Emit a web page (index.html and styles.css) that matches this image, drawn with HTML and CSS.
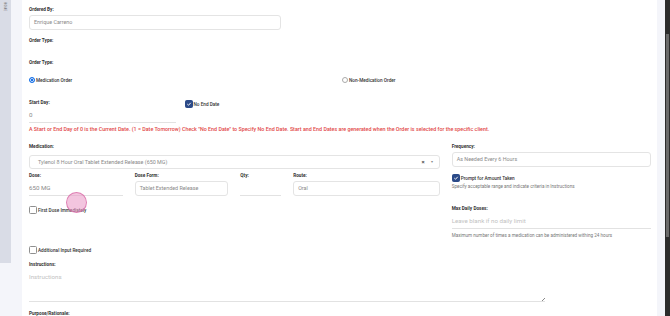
FILE: index.html
```html
<!DOCTYPE html>
<html>
<head>
    <title>New Order</title>
    <link rel="stylesheet" href="styles.css">
</head>
<body>
    <div class="app">
        <aside class="sidebar"><span class="side-label">HOME</span></aside>

        <main class="card">
            <!-- 주문자 -->
            <div class="row row-ordered">
                <div class="field span-5">
                    <label class="label">Ordered By:</label>
                    <div class="box">Enrique Carreno</div>
                </div>
            </div>

            <div class="row row-type-empty">
                <div class="field span-12">
                    <label class="label">Order Type:</label>
                </div>
            </div>

            <div class="row row-type">
                <div class="field span-12">
                    <label class="label">Order Type:</label>
                </div>
                <div class="span-6 radio-line">
                    <span class="radio checked"></span>Medication Order
                </div>
                <div class="span-6 radio-line radio-right">
                    <span class="radio"></span>Non-Medication Order
                </div>
            </div>

            <!-- 시작일 -->
            <div class="row row-start">
                <div class="field span-3">
                    <label class="label">Start Day:</label>
                    <div class="line-input">0</div>
                </div>
                <div class="span-3 check-line check-top">
                    <span class="check checked">
                        <svg viewBox="0 0 10 10"><path d="M2.2 5.2 4.2 7.1 7.9 3" /></svg>
                    </span>No End Date
                </div>
            </div>

            <p class="warning">A Start or End Day of 0 is the Current Date. (1 = Date Tomorrow) Check "No End Date" to Specify No End Date. Start and End Dates are generated when the Order is selected for the specific client.</p>

            <!-- 약품 정보 -->
            <div class="row row-med">
                <div class="span-8 col-left">
                    <div class="field">
                        <label class="label">Medication:</label>
                        <div class="box select-box">
                            <span>Tylenol 8 Hour Oral Tablet Extended Release (650 MG)</span>
                            <span class="select-icons"><span class="clear">&times;</span><span class="caret">&#9662;</span></span>
                        </div>
                    </div>

                    <div class="sub-row">
                        <div class="field span-2">
                            <label class="label">Dose:</label>
                            <div class="line-input">650 MG</div>
                        </div>
                        <div class="field span-2">
                            <label class="label">Dose Form:</label>
                            <div class="box">Tablet Extended Release</div>
                        </div>
                        <div class="field span-1">
                            <label class="label">Qty:</label>
                            <div class="line-input"></div>
                        </div>
                        <div class="field span-3">
                            <label class="label">Route:</label>
                            <div class="box">Oral</div>
                        </div>
                    </div>

                    <div class="check-line first-dose">
                        <span class="check"></span>First Dose Immediately
                    </div>
                    <div class="check-line additional">
                        <span class="check"></span>Additional Input Required
                    </div>
                </div>

                <div class="span-4 col-right">
                    <div class="field">
                        <label class="label">Frequency:</label>
                        <div class="box">As Needed Every 6 Hours</div>
                    </div>
                    <div class="check-line prompt">
                        <span class="check checked">
                            <svg viewBox="0 0 10 10"><path d="M2.2 5.2 4.2 7.1 7.9 3" /></svg>
                        </span>Prompt for Amount Taken
                    </div>
                    <p class="hint">Specify acceptable range and indicate criteria in Instructions</p>
                    <div class="field max-doses">
                        <label class="label">Max Daily Doses:</label>
                        <div class="line-input placeholder">Leave blank if no daily limit</div>
                    </div>
                    <p class="hint hint-max">Maximum number of times a medication can be administered withing 24 hours</p>
                </div>
            </div>

            <!-- 지시사항 -->
            <div class="row row-instr">
                <div class="field span-10">
                    <label class="label">Instructions:</label>
                    <div class="textarea">
                        <span class="placeholder">Instructions</span>
                        <span class="resize"></span>
                    </div>
                </div>
            </div>

            <div class="row row-purpose">
                <div class="field span-12">
                    <label class="label">Purpose/Rationale:</label>
                </div>
            </div>

            <span class="touch-dot"></span>
        </main>

        <div class="right-space"></div>
        <div class="scrollbar"><div class="thumb"></div></div>
    </div>
</body>
</html>
```

FILE: styles.css
```css
body {
    margin: 0;
    font-family: Roboto, "Liberation Sans", sans-serif;
    color: #2f2f2f;
}
.app {
    display: flex;
    height: 316px;
    overflow: hidden;
    background-color: #f4f5fa;
}
.sidebar {
    width: 11px;
    height: 263px;
    background-color: #d9dce6;
    flex-shrink: 0;
}
.side-label {
    display: block;
    writing-mode: vertical-rl;
    font-size: 3px;
    color: #777;
    margin: 2px 0 0 3px;
    letter-spacing: 0.2px;
}
.card {
    position: relative;
    width: 622px;
    margin-left: 11px;
    padding: 6px 6px 0 7px;
    background: white;
    flex-shrink: 0;
}
.right-space {
    width: 8px;
    flex-shrink: 0;
}
.scrollbar {
    width: 5px;
    background-color: #2c2c2c;
    flex-shrink: 0;
}
.thumb {
    margin-top: 34px;
    height: 203px;
    width: 3px;
    margin-left: 1px;
    background-color: #6a6a6a;
}

/* grid */
.row, .sub-row {
    display: grid;
    grid-template-columns: repeat(12, 1fr);
    column-gap: 12px;
}
.sub-row {
    grid-template-columns: repeat(8, 1fr);
}
.span-1 { grid-column: span 1; }
.span-2 { grid-column: span 2; }
.span-3 { grid-column: span 3; }
.span-4 { grid-column: span 4; }
.span-5 { grid-column: span 5; }
.span-6 { grid-column: span 6; }
.span-8 { grid-column: span 8; }
.span-10 { grid-column: span 10; }
.span-12 { grid-column: span 12; }

.label {
    display: block;
    font-size: 4.7px;
    line-height: 8px;
    font-weight: 700;
    color: #333;
    margin-bottom: 1px;
}
.box {
    height: 15px;
    box-sizing: border-box;
    border: 1px solid #e4e4e4;
    border-radius: 3px;
    padding: 0 4px;
    font-size: 5.4px;
    line-height: 13px;
    color: #8a8a8a;
    white-space: nowrap;
}
.line-input {
    height: 15px;
    box-sizing: border-box;
    border-bottom: 1px solid #e2e2e2;
    font-size: 6.2px;
    line-height: 14px;
    color: #8a8a8a;
}
.placeholder {
    color: #c2c2c2;
}

/* rows */
.row-type-empty {
    margin-top: 7px;
    height: 22px;
}
.row-type .field {
    margin-bottom: 8px;
}
.radio-line {
    display: flex;
    align-items: center;
    height: 8px;
    font-size: 4.7px;
    font-weight: 500;
    color: #333;
}
.radio-right {
    margin-left: -4px;
}
.radio {
    width: 4px;
    height: 4px;
    border: 1px solid #aaa;
    border-radius: 50%;
    margin-right: 1px;
    background: white;
}
.radio.checked {
    border-color: #1a73e8;
    background: #1a73e8;
    box-shadow: inset 0 0 0 0.8px #fff;
}
.row-start {
    margin-top: 15px;
}
.check-line {
    display: flex;
    align-items: center;
    height: 8px;
    font-size: 4.7px;
    font-weight: 500;
    color: #333;
}
.check-top {
    margin-top: 1px;
    margin-left: -3px;
}
.check {
    width: 8px;
    height: 8px;
    box-sizing: border-box;
    border: 1px solid #8f8f8f;
    border-radius: 1.5px;
    margin-right: 1px;
    display: flex;
    background: white;
}
.check.checked {
    border-color: #2b4a88;
    background-color: #2b4a88;
}
.check svg {
    width: 100%;
    height: 100%;
    fill: none;
    stroke: white;
    stroke-width: 1.6;
}
.warning {
    margin: 2px 0 0;
    font-size: 5.35px;
    line-height: 8px;
    font-weight: 500;
    color: #e24848;
    white-space: nowrap;
}
.row-med {
    margin-top: 10px;
}
.col-left .select-box {
    margin-top: 4px;
    height: 14px;
    line-height: 12px;
    padding-left: 8px;
    display: flex;
    justify-content: space-between;
}
.select-icons {
    display: flex;
    gap: 6px;
    padding-right: 2px;
    color: #555;
}
.clear {
    font-size: 6px;
    font-weight: 700;
}
.caret {
    font-size: 3.5px;
    color: #888;
}
.sub-row {
    margin-top: 3px;
}
.first-dose {
    margin-top: 10px;
}
.additional {
    margin-top: 32px;
}
.prompt {
    margin-top: 7px;
}
.hint {
    margin: 2px 0 0;
    font-size: 4.6px;
    line-height: 6px;
    color: #777;
    white-space: nowrap;
}
.max-doses {
    margin-top: 15px;
}
.hint-max {
    margin-top: 4px;
}
.row-instr {
    margin-top: 7px;
}
.textarea {
    position: relative;
    height: 32px;
    box-sizing: border-box;
    border-bottom: 1px solid #e2e2e2;
    font-size: 6.2px;
    line-height: 14px;
}
.resize {
    position: absolute;
    right: 0;
    bottom: 0;
    width: 3px;
    height: 3px;
    background: linear-gradient(135deg, transparent 45%, #888 45%, #888 60%, transparent 60%);
}
.row-purpose {
    margin-top: 8px;
}

/* 터치 표시 */
.touch-dot {
    position: absolute;
    left: 44px;
    top: 192px;
    width: 19px;
    height: 19px;
    border-radius: 50%;
    background-color: rgba(233, 150, 196, 0.55);
    border: 1px solid rgba(214, 96, 160, 0.7);
}
```
